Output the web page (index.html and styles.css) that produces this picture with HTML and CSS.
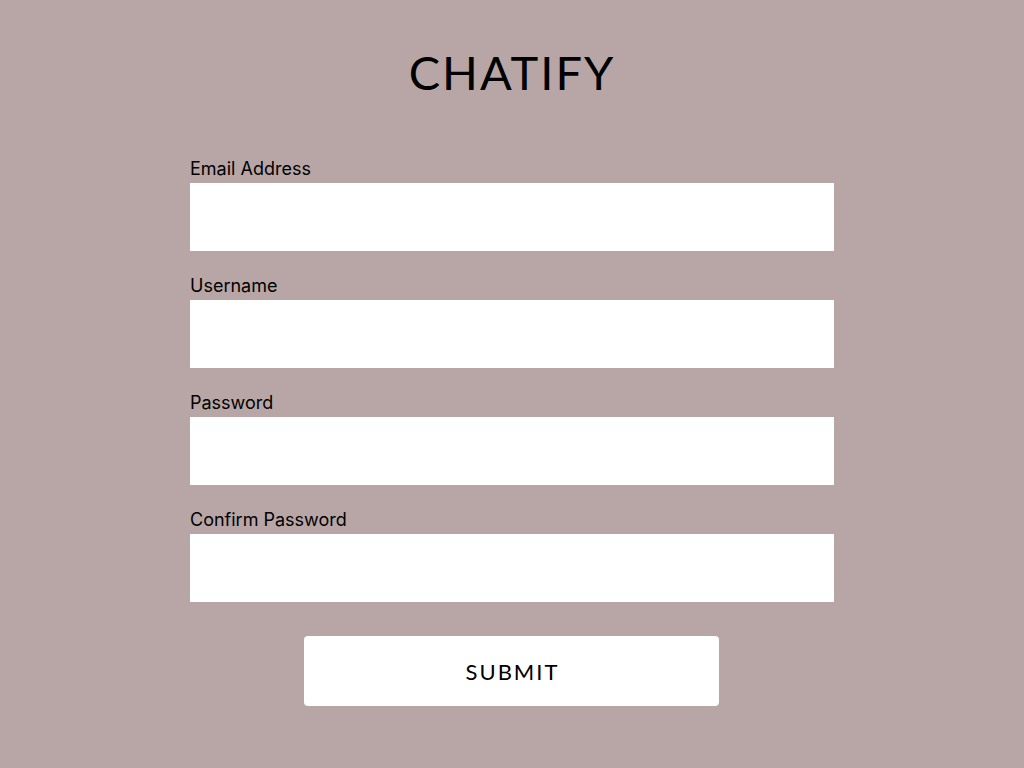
FILE: index.html
```html
<!DOCTYPE html>
<html lang="en">
<head>
<meta charset="utf-8">
<title>Chatify</title>
<link rel="stylesheet" href="styles.css">
</head>
<body>
<main class="page">
  <h1 class="title">CHATIFY</h1>
  <form class="form">
    <label class="field">
      <span class="label">Email Address</span>
      <input class="input" type="email">
    </label>
    <label class="field">
      <span class="label">Username</span>
      <input class="input" type="text">
    </label>
    <label class="field">
      <span class="label">Password</span>
      <input class="input" type="password">
    </label>
    <label class="field">
      <span class="label">Confirm Password</span>
      <input class="input" type="password">
    </label>
    <button class="submit" type="button">SUBMIT</button>
  </form>
</main>
</body>
</html>
```
FILE: styles.css
```css
html, body {
  margin: 0;
  padding: 0;
  background: #b8a6a6;
  height: 100%;
}
.page {
  display: flex;
  flex-direction: column;
  align-items: center;
  padding-top: 44px;
}
.title {
  margin: 0;
  font-family: "Lato", "Open Sans", sans-serif;
  font-weight: 400;
  font-size: 47px;
  line-height: 56px;
  letter-spacing: 2px;
  color: #000;
}
.form {
  width: 644px;
  margin-top: 58px;
  display: flex;
  flex-direction: column;
  gap: 24px;
}
.field {
  display: flex;
  flex-direction: column;
}
.label {
  font-family: "Inter", "Liberation Sans", sans-serif;
  font-size: 18px;
  line-height: 22px;
  margin-bottom: 3px;
  color: #000;
}
.input {
  display: block;
  box-sizing: border-box;
  width: 100%;
  height: 68px;
  margin: 0;
  border: none;
  background: #fff;
  padding: 0 12px;
  font-size: 18px;
}
.submit {
  align-self: flex-start;
  margin-left: 114px;
  width: 415px;
  height: 70px;
  margin-top: 10px;
  padding: 0;
  border: none;
  border-radius: 4px;
  background: #fff;
  font-family: "Lato", "Open Sans", sans-serif;
  font-size: 22px;
  letter-spacing: 2px;
  text-indent: 2px;
  color: #000;
  cursor: pointer;
}
```
